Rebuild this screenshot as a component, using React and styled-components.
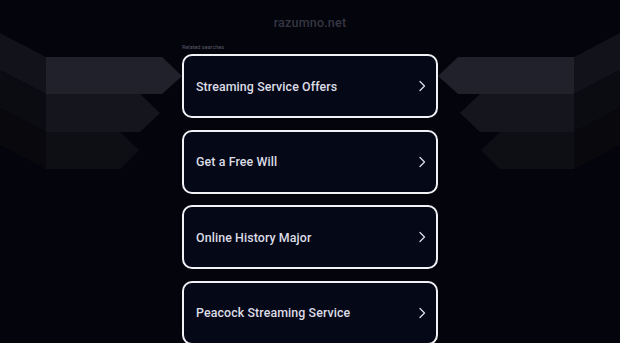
import React from "react";
import styled, { createGlobalStyle } from "styled-components";

const Global = createGlobalStyle`
  html, body { margin: 0; padding: 0; background: #04040c; }
  body { font-family: Roboto, "Liberation Sans", Arial, sans-serif; }
`;

const Page = styled.div`
  position: relative;
  width: 620px;
  height: 343px;
  overflow: hidden;
  background: #04040c;
`;

const Backdrop = styled.svg`
  position: absolute;
  left: 0;
  top: 0;
  width: 620px;
  height: 343px;
  z-index: 0;
`;

const Content = styled.main`
  position: relative;
  z-index: 1;
  display: flex;
  flex-direction: column;
  align-items: center;
`;

const Domain = styled.h1`
  margin: 14px 0 0;
  height: 17px;
  font-size: 12.5px;
  line-height: 17px;
  font-weight: 500;
  letter-spacing: 0.2px;
  color: #363642;
`;

const List = styled.section`
  width: 256px;
  margin-top: 12px;
  display: flex;
  flex-direction: column;
`;

const Caption = styled.div`
  font-size: 5.5px;
  line-height: 8px;
  color: #5a5a66;
  margin-bottom: 3px;
`;

const Cards = styled.div`
  display: flex;
  flex-direction: column;
  gap: 11.6px;
`;

const Card = styled.a`
  box-sizing: border-box;
  height: 64px;
  display: flex;
  align-items: center;
  justify-content: space-between;
  padding: 0 10px 0 12px;
  border: 2px solid #f2f2f6;
  border-radius: 10px;
  background: #050816;
  color: #dcdce6;
  text-decoration: none;
  font-size: 12.4px;
  font-weight: 500;
  letter-spacing: 0.1px;
`;

const Chevron = styled.svg`
  width: 8px;
  height: 12px;
  flex: none;
`;

const items = [
  "Streaming Service Offers",
  "Get a Free Will",
  "Online History Major",
  "Peacock Streaming Service",
];

function Bands() {
  return (
    <Backdrop viewBox="0 0 620 343" aria-hidden="true">
      <polygon points="0,33 46,57 46,94 0,70" fill="#12131a" />
      <polygon points="0,70 46,94 46,132 0,108" fill="#0b0c12" />
      <polygon points="0,108 46,132 46,169 0,145" fill="#08080d" />
      <polygon points="46,57 162,57 182,76 162,94 46,94" fill="#20212b" />
      <polygon points="46,94 140,94 160,113 140,132 46,132" fill="#15161d" />
      <polygon points="46,132 120,132 139,150 120,169 46,169" fill="#0e0f15" />
      <polygon points="620,33 574,57 574,94 620,70" fill="#12131a" />
      <polygon points="620,70 574,94 574,132 620,108" fill="#0b0c12" />
      <polygon points="620,108 574,132 574,169 620,145" fill="#08080d" />
      <polygon points="574,57 458,57 438,76 458,94 574,94" fill="#20212b" />
      <polygon points="574,94 480,94 460,113 480,132 574,132" fill="#15161d" />
      <polygon points="574,132 500,132 481,150 500,169 574,169" fill="#0e0f15" />
    </Backdrop>
  );
}

export default function App() {
  return (
    <>
      <Global />
      <Page>
        <Bands />
        <Content>
          <Domain>razumno.net</Domain>
          <List>
            <Caption>Related searches</Caption>
            <Cards>
              {items.map((t) => (
                <Card key={t} href="#">
                  <span>{t}</span>
                  <Chevron viewBox="0 0 8 12">
                    <path d="M2 1.5 L6.5 6 L2 10.5" fill="none" stroke="#dcdce6" strokeWidth="1.3" strokeLinecap="round" strokeLinejoin="round" />
                  </Chevron>
                </Card>
              ))}
            </Cards>
          </List>
        </Content>
      </Page>
    </>
  );
}
